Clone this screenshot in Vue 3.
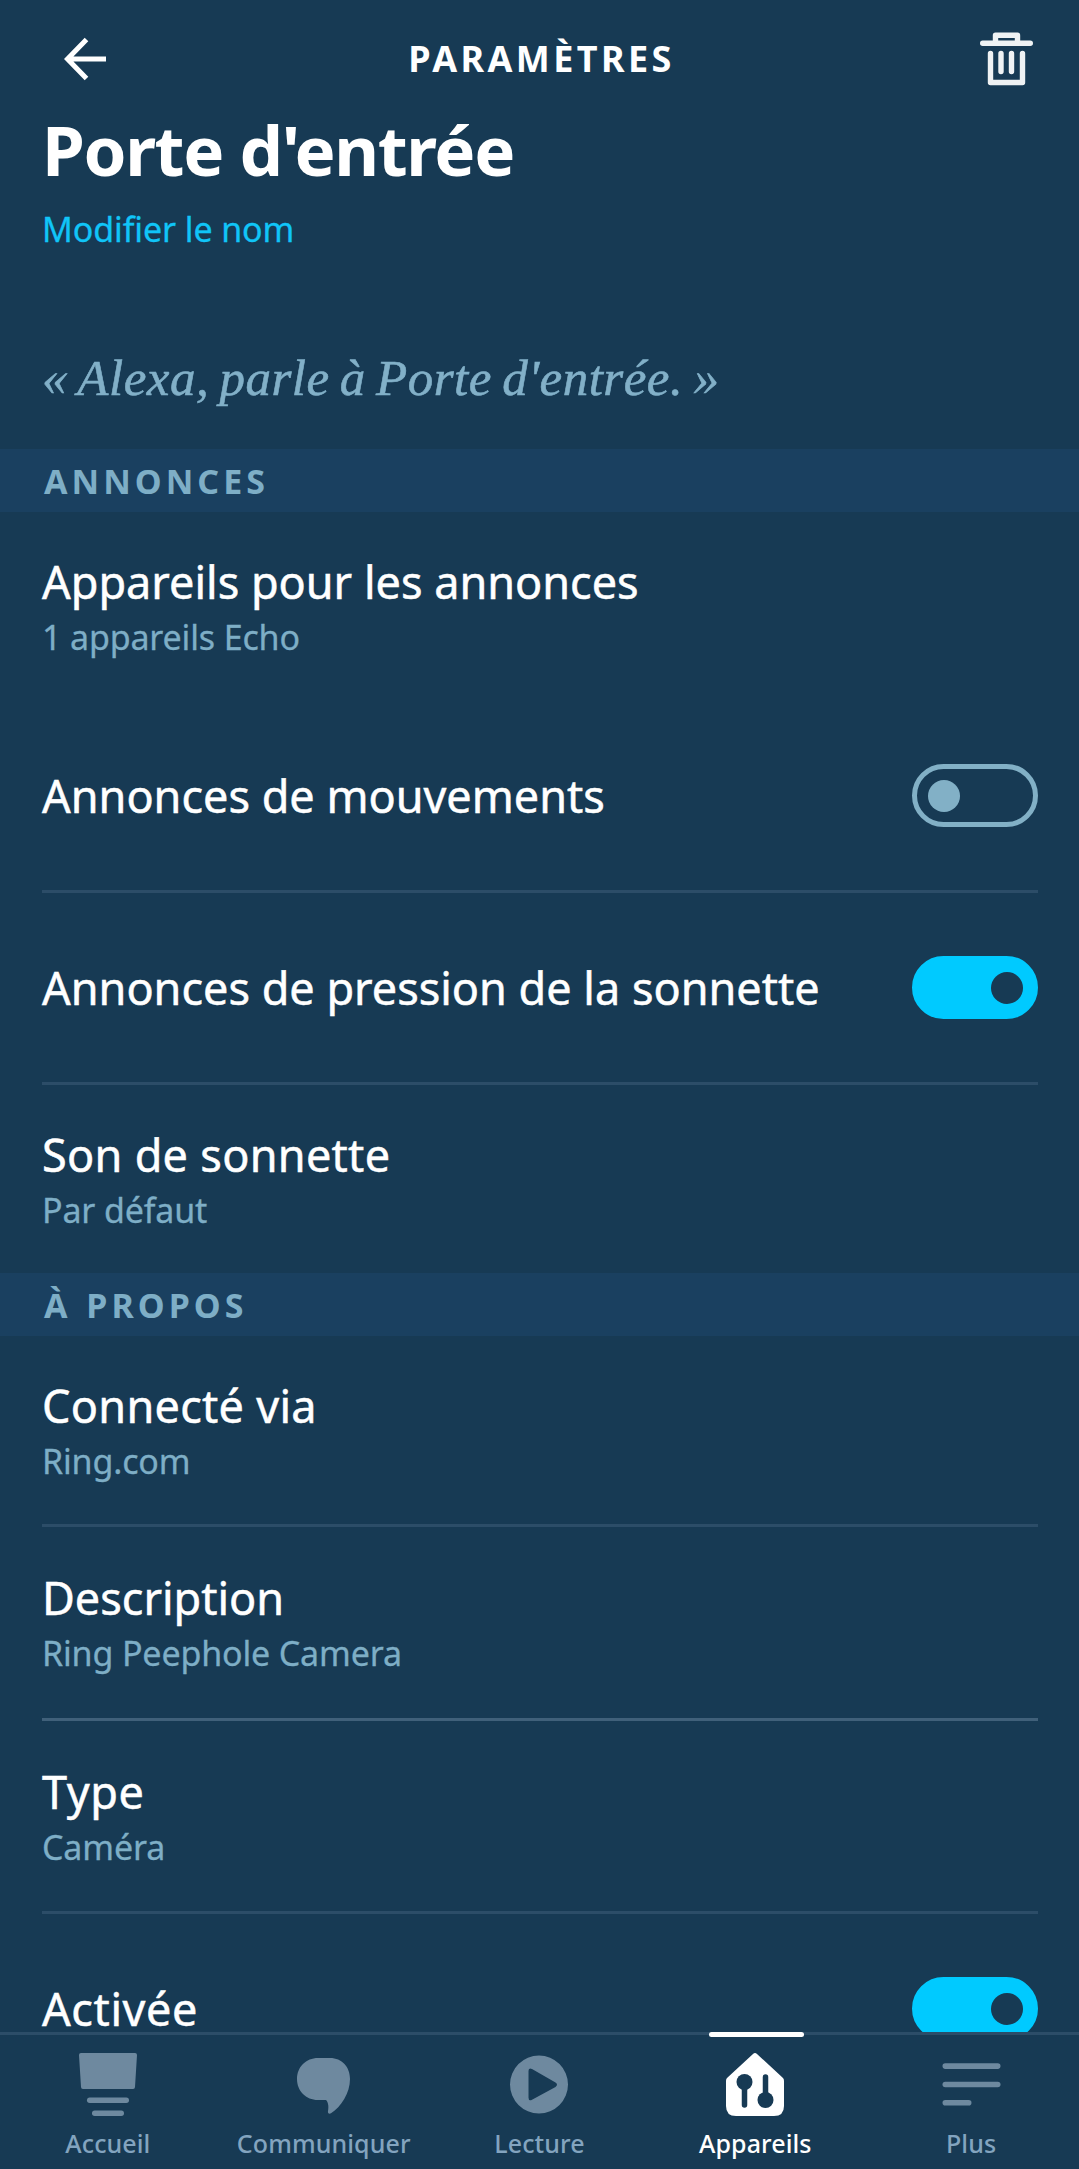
<script setup>
import { ref } from "vue";

const device = ref("Porte d'entrée");

// 設定セクション
const sections = ref([
  {
    title: "ANNONCES",
    rows: [
      { id: "devices", label: "Appareils pour les annonces", detail: "1 appareils Echo", size: "first" },
      { id: "motion", label: "Annonces de mouvements", on: false, size: "toggle-row", line: true },
      { id: "press", label: "Annonces de pression de la sonnette", on: true, size: "toggle-row", line: true },
      { id: "sound", label: "Son de sonnette", detail: "Par défaut", size: "last" },
    ],
  },
  {
    title: "À PROPOS",
    rows: [
      { id: "via", label: "Connecté via", detail: "Ring.com", size: "short", line: true },
      { id: "desc", label: "Description", detail: "Ring Peephole Camera", size: "normal", line: true, bright: true },
      { id: "type", label: "Type", detail: "Caméra", size: "normal", line: true },
      { id: "enabled", label: "Activée", on: true, size: "toggle-row" },
    ],
  },
]);

const tabs = [
  { id: "home", label: "Accueil" },
  { id: "chat", label: "Communiquer" },
  { id: "play", label: "Lecture" },
  { id: "devices", label: "Appareils" },
  { id: "more", label: "Plus" },
];
const activeTab = ref("devices");

const toggle = (row) => {
  if (row.on !== undefined) row.on = !row.on;
};
</script>

<template>
  <div class="app">
    <header class="topbar">
      <svg class="back" width="44" height="44" viewBox="0 0 44 44" fill="none" stroke="#fff" stroke-width="5">
        <path d="M43 22H5M23.5 2.5L4.5 22l19 19.5" />
      </svg>
      <h1>PARAMÈTRES</h1>
      <svg class="trash" width="54" height="54" viewBox="0 0 54 54" fill="none" stroke="#eff2f4" stroke-width="5.400" stroke-linecap="round" stroke-linejoin="round">
        <path d="M2.700 11.200H50.300M15.500 11V3.200H37.500V11M10.500 21.500V50.500H42.500V21.500M21 21.500V39.500M31.500 21.500V39.500" />
      </svg>
    </header>

    <main class="content">
      <div class="intro">
        <h2>{{ device }}</h2>
        <a class="rename">Modifier le nom</a>
        <p class="phrase">« Alexa, parle à {{ device }}. »</p>
      </div>

      <section v-for="section in sections" :key="section.title">
        <h3>{{ section.title }}</h3>
        <div
          v-for="row in section.rows"
          :key="row.id"
          class="row"
          :class="[row.size, { line: row.line, bright: row.bright }]"
        >
          <div class="texts">
            <div class="label" :class="row.id">{{ row.label }}</div>
            <div v-if="row.detail" class="detail">{{ row.detail }}</div>
          </div>
          <button v-if="row.on !== undefined" class="switch" :class="{ on: row.on }" @click="toggle(row)">
            <span class="knob"></span>
          </button>
        </div>
      </section>
    </main>

    <nav class="tabbar">
      <button
        v-for="tab in tabs"
        :key="tab.id"
        class="tab"
        :class="{ active: activeTab === tab.id }"
        @click="activeTab = tab.id"
      >
        <svg width="64" height="64" viewBox="0 0 64 64" fill="currentColor">
          <g v-if="tab.id === 'home'">
            <path d="M5 0H59Q61 0 61 2L59 34Q59 36 57 36H7Q5 36 5 34L3 2Q3 0 5 0Z" />
            <rect x="11" y="44.500" width="42" height="5.500" rx="2.700" />
            <rect x="16" y="57.500" width="32" height="5.500" rx="2.700" />
          </g>
          <path
            v-else-if="tab.id === 'chat'"
            d="M26 5H38C50 5 58 14 58 26C58 40 49 54 39 60.300C37 61.500 35.500 60 36 58C37 53 36 49 34 47H26C14 47 5 38 5 26S14 5 26 5Z"
          />
          <path
            v-else-if="tab.id === 'play'"
            fill-rule="evenodd"
            d="M32 2.500A29 29 0 1 1 32 60.500A29 29 0 1 1 32 2.500ZM21.500 18V44.500Q21.500 48.500 25 46.800L48.500 34Q51.500 31.800 48.500 29.600L25 16Q21.500 14.300 21.500 18Z"
          />
          <g v-else-if="tab.id === 'devices'">
            <path d="M30 1Q32 -1 34 1L60 25Q61 26 61 28V53Q61 63 51 63H13Q3 63 3 53V28Q3 26 4 25Z" />
            <g class="cut">
              <circle cx="21.500" cy="29" r="8" />
              <circle cx="42.500" cy="47" r="8" />
              <path d="M21.500 29V52M42.500 47V24" />
            </g>
          </g>
          <g v-else>
            <rect x="3.500" y="10.300" width="58" height="5.600" rx="2.800" />
            <rect x="3.500" y="28.700" width="58" height="5.600" rx="2.800" />
            <rect x="3.500" y="47" width="29" height="5.600" rx="2.800" />
          </g>
        </svg>
        <span>{{ tab.label }}</span>
      </button>
    </nav>
  </div>
</template>

<style>
body {
  margin: 0;
  background: #173a54;
}
</style>

<style scoped>
* {
  box-sizing: border-box;
}

.app {
  display: flex;
  flex-direction: column;
  height: 2169px;
  overflow: hidden;
  background: #173a54;
  color: #fff;
  font-family: "Noto Sans", "Open Sans", sans-serif;
}

h1, h2, h3, p {
  margin: 0;
}

button {
  border: none;
  background: none;
  padding: 0;
  font: inherit;
  cursor: pointer;
}

.topbar {
  display: grid;
  grid-template-columns: 54px 1fr 54px;
  align-items: center;
  height: 102px;
  padding: 15px 45px 0 63px;
  flex-shrink: 0;
}

h1 {
  font-size: 36px;
  line-height: 50px;
  letter-spacing: 3.4px;
  text-align: center;
  padding-right: 14px;
}

.content {
  flex: 1;
  min-height: 0;
  overflow: hidden;
}

.intro {
  height: 347px;
  padding: 0 42px;
}

h2 {
  font-size: 69px;
  line-height: 94px;
  letter-spacing: -1.4px;
}

.rename {
  display: block;
  margin-top: 9px;
  font-size: 34px;
  line-height: 48px;
  letter-spacing: -0.1px;
  color: #10c5f8;
  -webkit-text-stroke: 0.3px #10c5f8;
}

.phrase {
  margin-top: 95px;
  font-family: "Liberation Serif", serif;
  font-style: italic;
  font-size: 51px;
  line-height: 60px;
  letter-spacing: 0.5px;
  word-spacing: -3px;
  color: #82b0c8;
  -webkit-text-stroke: 0.6px #82b0c8;
  white-space: nowrap;
}

h3 {
  height: 63px;
  padding-left: 44px;
  background: #1a4060;
  color: #7eaec6;
  font-size: 34px;
  line-height: 65px;
  letter-spacing: 4px;
  word-spacing: 2px;
}

.row {
  display: flex;
  justify-content: space-between;
  align-items: flex-start;
  margin: 0 41px 0 42px;
  padding-top: 40px;
}

.first {
  height: 189px;
}

.short {
  height: 191px;
}

.normal {
  height: 193px;
  padding-top: 41px;
}

.last {
  height: 188px;
}

.toggle-row {
  height: 192px;
  padding-top: 63px;
}

.toggle-row .label {
  margin-top: 2px;
}

.line {
  border-bottom: 3px solid #2c4d68;
}

.bright {
  height: 194px;
  border-color: #40607a;
}

.label {
  font-size: 45px;
  line-height: 60px;
  white-space: nowrap;
  -webkit-text-stroke: 0.5px #fff;
}

.sound, .via {
  letter-spacing: 0.3px;
}

.type, .enabled {
  letter-spacing: 0.6px;
}

.detail {
  font-size: 34px;
  line-height: 50px;
  letter-spacing: -0.15px;
  color: #7eaec6;
  -webkit-text-stroke: 0.3px #7eaec6;
}

.switch {
  display: flex;
  align-items: center;
  width: 126px;
  height: 63px;
  padding: 0 10.5px;
  border: 5px solid #82b0c6;
  border-radius: 32px;
}

.knob {
  width: 32px;
  height: 32px;
  border-radius: 50%;
  background: #82b0c6;
}

.switch.on {
  justify-content: flex-end;
  border-color: #00caff;
  background: #00caff;
}

.on .knob {
  background: #173a54;
}

.tabbar {
  display: grid;
  grid-template-columns: repeat(5, 1fr);
  height: 137px;
  flex-shrink: 0;
  border-top: 3px solid #2c4d68;
}

.tab {
  position: relative;
  display: flex;
  flex-direction: column;
  align-items: center;
  padding-top: 18px;
  color: #6e899f;
}

.tab span {
  margin-top: 9px;
  font-size: 25px;
  font-weight: 500;
  line-height: 34px;
  letter-spacing: 0.1px;
  color: #83a4bf;
}

.tab.active, .tab.active span {
  color: #fff;
}

.tab.active::before {
  content: "";
  position: absolute;
  top: -3px;
  width: 95px;
  height: 5px;
  margin-left: 2px;
  border-radius: 3px;
  background: #fff;
}

.cut {
  fill: #173a54;
  stroke: #173a54;
}

.cut circle {
  stroke: none;
}

.cut path {
  stroke-width: 5.5;
  stroke-linecap: round;
}
</style>
